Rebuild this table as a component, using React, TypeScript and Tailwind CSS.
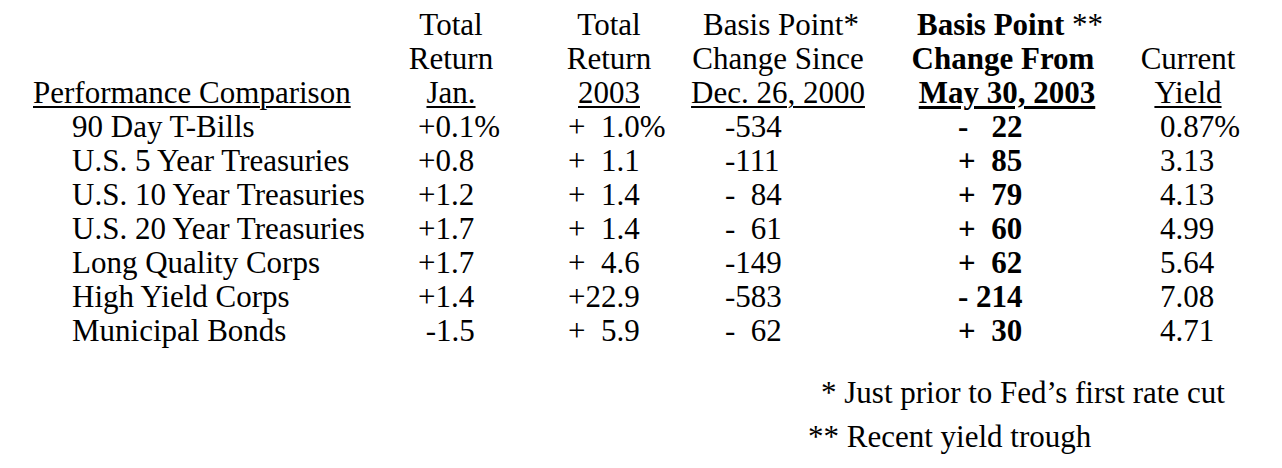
const rows = [
  { name: '90 Day T-Bills', jan: '+0.1%', ytd: '+  1.0%', since: '-534', from: '-   22', yld: '0.87%' },
  { name: 'U.S. 5 Year Treasuries', jan: '+0.8', ytd: '+  1.1', since: '-111', from: '+  85', yld: '3.13' },
  { name: 'U.S. 10 Year Treasuries', jan: '+1.2', ytd: '+  1.4', since: '-  84', from: '+  79', yld: '4.13' },
  { name: 'U.S. 20 Year Treasuries', jan: '+1.7', ytd: '+  1.4', since: '-  61', from: '+  60', yld: '4.99' },
  { name: 'Long Quality Corps', jan: '+1.7', ytd: '+  4.6', since: '-149', from: '+  62', yld: '5.64' },
  { name: 'High Yield Corps', jan: '+1.4', ytd: '+22.9', since: '-583', from: '- 214', yld: '7.08' },
  { name: 'Municipal Bonds', jan: ' -1.5', ytd: '+  5.9', since: '-  62', from: '+  30', yld: '4.71' },
];

type Row = (typeof rows)[number];

function Column({
  head,
  field,
  className,
  dataClass,
  headAlign = 'items-center',
}: {
  head: React.ReactNode;
  field: keyof Row;
  className: string;
  dataClass: string;
  headAlign?: string;
}) {
  return (
    <div className={`flex flex-col ${className}`}>
      <div className={`flex h-[102px] flex-col justify-end ${headAlign}`}>{head}</div>
      <div className={`flex flex-col whitespace-pre ${dataClass}`}>
        {rows.map((r) => (
          <div key={r.name}>{r[field]}</div>
        ))}
      </div>
    </div>
  );
}

const ul = 'underline decoration-2 underline-offset-[3px]';

export default function App() {
  return (
    <div className="h-[468px] w-[1282px] bg-white pt-[8px] font-['Liberation_Serif',serif] text-[31px] leading-[34px] text-black">
      <div className="flex">
        <Column
          className="ml-[33px] w-[362px]"
          headAlign="items-start"
          dataClass="pl-[39px]"
          field="name"
          head={<span className={ul}>Performance Comparison</span>}
        />
        <Column
          className="ml-[6px] w-[100px]"
          dataClass="pl-[17px]"
          field="jan"
          head={
            <>
              <span>Total</span>
              <span>Return</span>
              <span className={ul}>Jan.</span>
            </>
          }
        />
        <Column
          className="ml-[58px] w-[100px]"
          dataClass="pl-[9px]"
          field="ytd"
          head={
            <>
              <span>Total</span>
              <span>Return</span>
              <span className={ul}>2003</span>
            </>
          }
        />
        <Column
          className="ml-[24px] w-[190px]"
          dataClass="pl-[42px]"
          field="since"
          head={
            <>
              <span className="pl-[6px]">Basis Point*</span>
              <span>Change Since</span>
              <span className={ul}>Dec. 26, 2000</span>
            </>
          }
        />
        <Column
          className="ml-[34px] w-[200px] font-bold"
          dataClass="pl-[51px]"
          field="from"
          head={
            <>
              <span className="whitespace-pre pl-[6px]">
                Basis Point <span className="font-normal">**</span>
              </span>
              <span className="pr-[8px]">Change From</span>
              <span className="underline decoration-[3px] underline-offset-[3px]">May 30, 2003</span>
            </>
          }
        />
        <Column
          className="ml-[26px] w-[110px]"
          dataClass="pl-[27px]"
          field="yld"
          head={
            <>
              <span>Current</span>
              <span className={ul}>Yield</span>
            </>
          }
        />
      </div>

      <div className="ml-[808px] mt-[23px] flex flex-col leading-[44px]">
        <span className="pl-[13px]">* Just prior to Fed’s first rate cut</span>
        <span>** Recent yield trough</span>
      </div>
    </div>
  );
}
